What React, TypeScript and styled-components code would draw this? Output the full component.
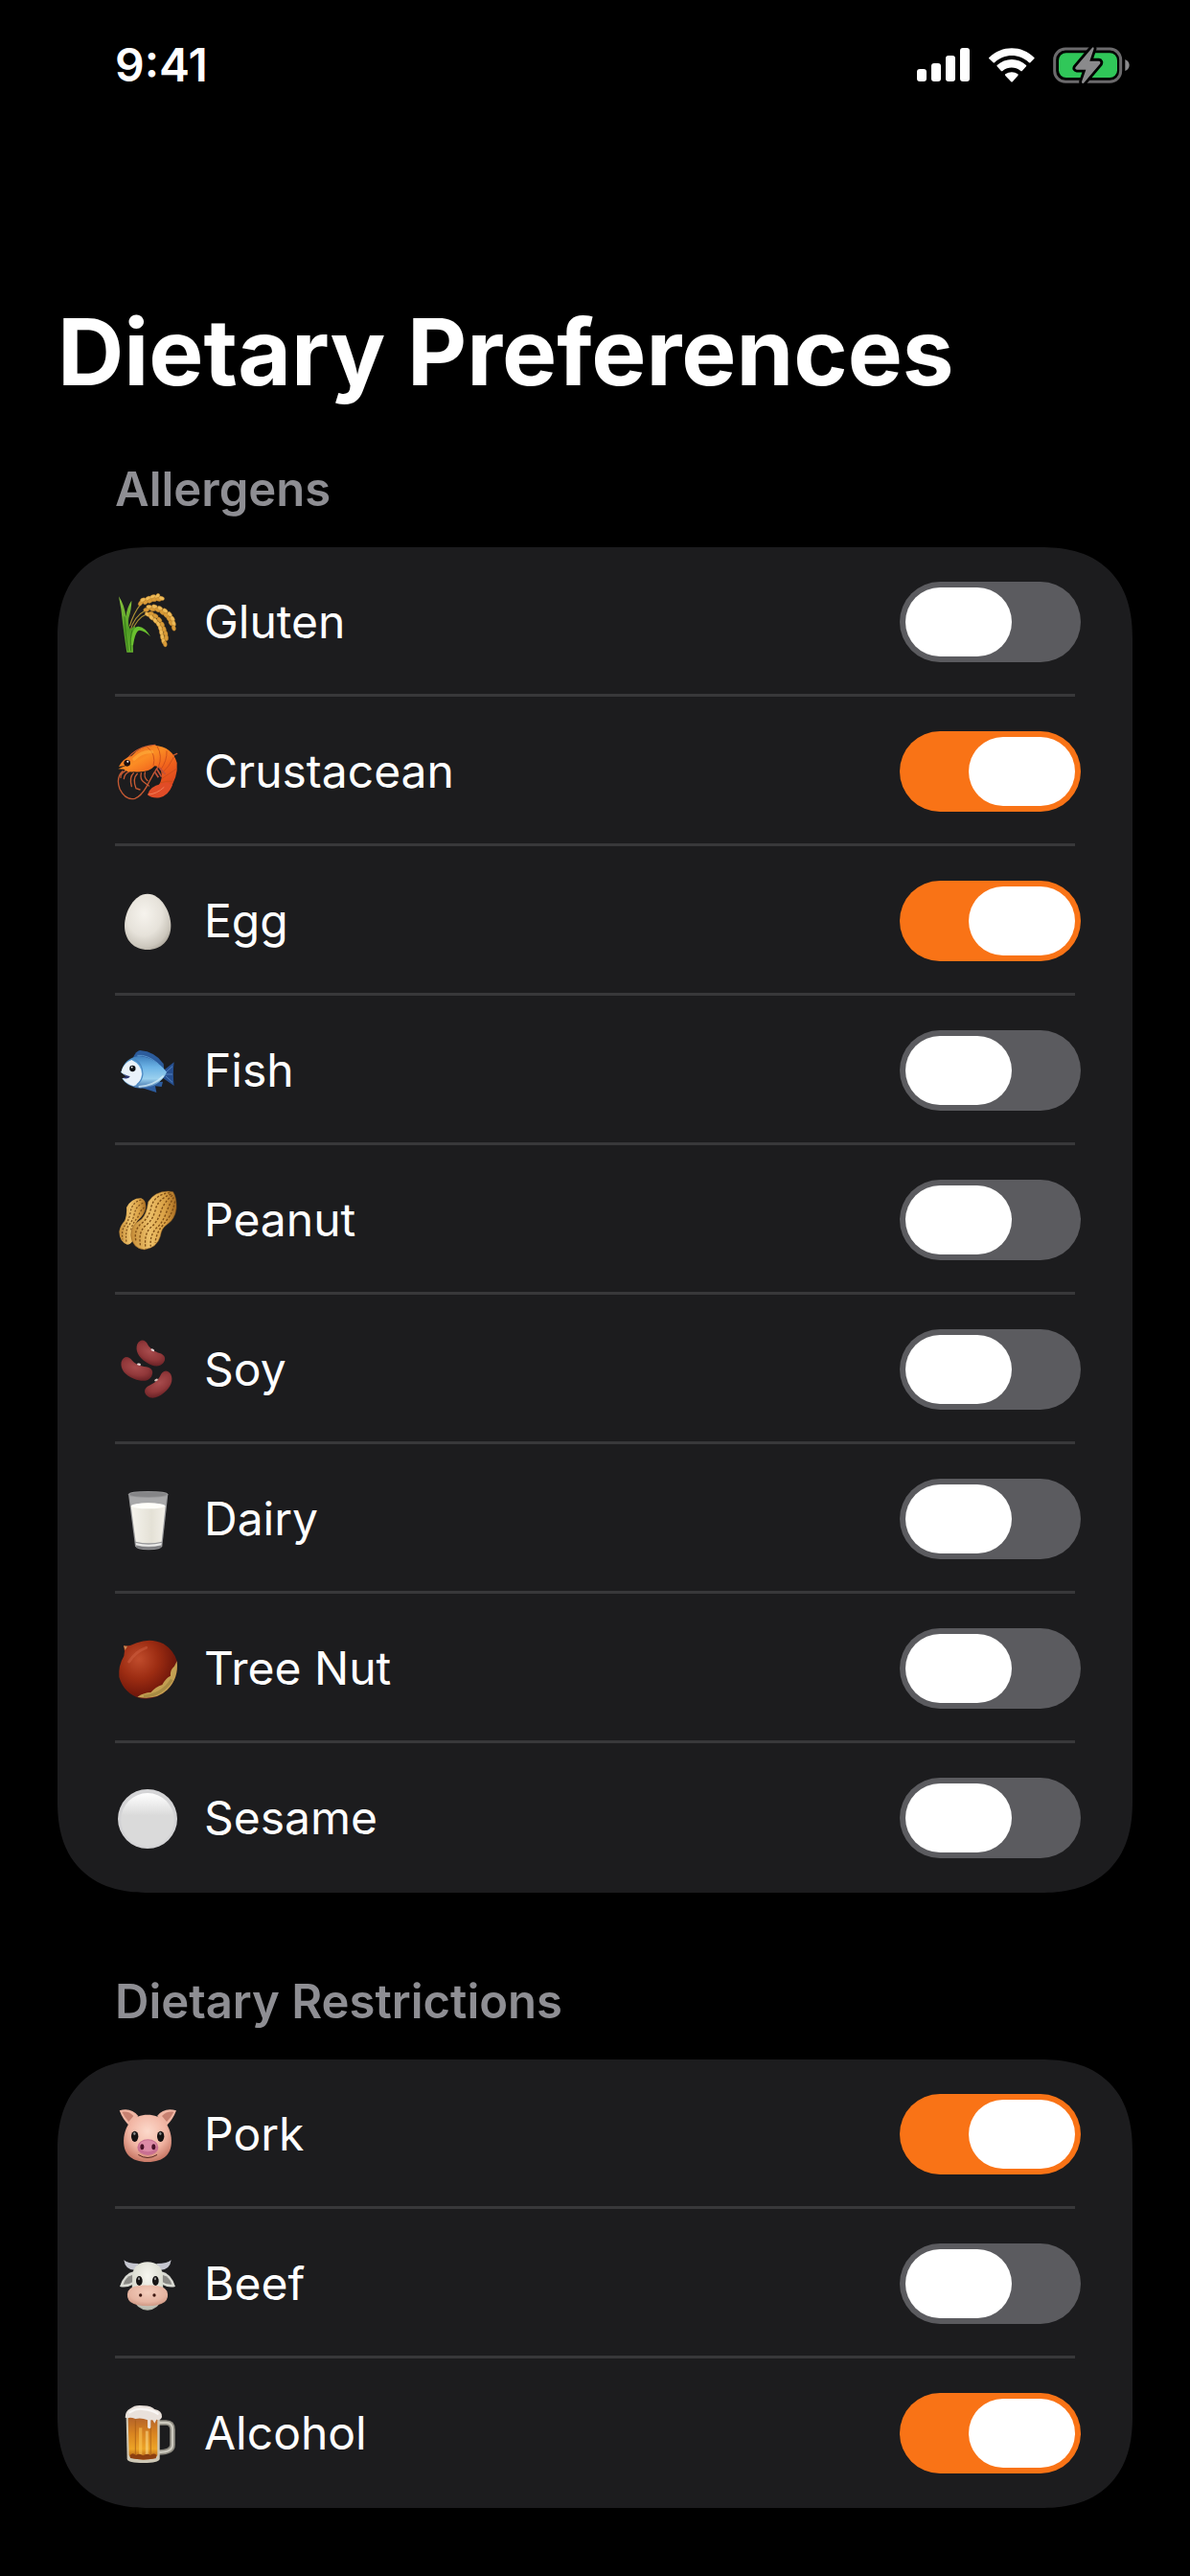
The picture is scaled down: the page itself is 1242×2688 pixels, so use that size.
import React, { useState } from 'react';
import styled, { createGlobalStyle } from 'styled-components';

const GlobalStyle = createGlobalStyle`
  *, *::before, *::after { box-sizing: border-box; }
  html { background: #000; }
  body {
    margin: 0;
    background: #000;
    color: #fff;
    font-family: Inter, Roboto, 'Liberation Sans', sans-serif;
  }
`;

const Screen = styled.div`
  min-height: 100vh;
  padding-bottom: 70px;
  background: #000;
`;

const StatusBar = styled.header`
  display: flex;
  align-items: center;
  justify-content: space-between;
  height: 136px;
  padding: 0 63px 0 120px;
`;

const Time = styled.time`
  font-size: 48px;
  line-height: 56px;
  font-weight: 600;
`;

const StatusIcons = styled.div`
  display: flex;
  align-items: center;
  gap: 18px;

  svg { display: block; }
`;

const Main = styled.main`
  padding: 171px 60px 0;
`;

const Title = styled.h1`
  margin: 0;
  font-size: 96px;
  line-height: 120px;
  font-weight: 700;
`;

const Section = styled.section`
  padding-top: 54px;

  & + & { padding-top: 84px; }
`;

const SectionTitle = styled.h2`
  margin: 0;
  padding: 0 60px 30px;
  color: #8e8e93;
  font-size: 49px;
  line-height: 60px;
  font-weight: 600;
`;

const Card = styled.ul`
  margin: 0;
  padding: 0 60px;
  list-style: none;
  background: #1c1c1e;
  border-radius: 82px;

  @supports (corner-shape: superellipse(1.2)) {
    border-radius: 96px;
    corner-shape: superellipse(1.25);
  }
`;

const Item = styled.li`
  border-bottom: 3px solid #38383a;

  &:last-child { border-bottom-color: transparent; }
`;

const Row = styled.label`
  display: flex;
  align-items: center;
  gap: 25px;
  height: 153px;
  padding-top: 3px;
  margin-right: -6px;
  font-size: 48px;
  line-height: 60px;
  cursor: pointer;
`;

const Name = styled.span`
  flex: 1;
`;

const EmojiArt = styled.svg`
  display: block;
  flex: none;
  width: 68px;
  height: 68px;
`;

const Switch = styled.input`
  appearance: none;
  display: flex;
  flex: none;
  width: 189px;
  height: 84px;
  margin: 0;
  padding: 6px;
  border-radius: 42px;
  background: #5b5b5f;
  cursor: pointer;

  &::before {
    content: '';
    width: 111px;
    height: 72px;
    border-radius: 36px;
    background: #fff;
  }

  &:checked {
    justify-content: flex-end;
    background: #f97316;
  }
`;

/* ---------- status icons ---------- */

const Signal = () => (
  <svg width="56" height="36" viewBox="0 0 56 36" fill="#fff" aria-hidden="true">
    <rect x="0" y="22" width="10" height="13" rx="3" />
    <rect x="15" y="16" width="10" height="19" rx="3" />
    <rect x="30" y="8" width="10" height="27" rx="3" />
    <rect x="45" y="0" width="10" height="35" rx="3" />
  </svg>
);

const Wifi = () => (
  <svg width="50" height="36" viewBox="392 86 150 108" fill="#fff" aria-hidden="true">
    <path d="M396 116C436 77 498 77 537 116Q539 118 537 120L526 131Q523 134 520 131C490 103 444 103 414 131Q411 134 408 131L396 120Q394 118 396 116Z" />
    <path d="M421 140C447 116 487 116 512 140Q514 142 512 144L500 157Q497 160 494 157C478 144 455 144 439 157Q436 160 433 157L421 144Q419 142 421 140Z" />
    <path d="M447 168C459 160 475 160 486 168Q488 170 486 173L470 191Q467 194 464 191L447 173Q445 170 447 168Z" />
  </svg>
);

const Battery = () => (
  <svg width="80" height="40" viewBox="596 82 240 120" aria-hidden="true">
    <rect x="601" y="91" width="207" height="103" rx="34" fill="none" stroke="#6b6a6c" strokeWidth="9" />
    <path d="M822 124Q835 130 835 142T822 160Z" fill="#8a8a8c" />
    <rect x="614" y="104" width="183" height="77" rx="23" fill="#30c759" />
    <path
      d="M719 87L667 148Q663 155 671 156H699L686 194Q686 201 692 198L743 138Q747 130 739 129H711L724 90Q723 84 719 87Z"
      fill="#8a8a8c"
      stroke="#000"
      strokeWidth="17"
      strokeLinejoin="round"
      paintOrder="stroke"
    />
  </svg>
);

/* ---------- food drawings ---------- */

const GRAINS: Array<[number, number, number]> = [
  [140, 118, -55], [148, 108, -20], [156, 115, -35], [164, 103, -25], [170, 111, -30],
  [179, 98, -20], [183, 107, -10], [193, 96, -50], [197, 106, 10], [206, 103, 20],
  [158, 139, -10], [167, 130, 10], [178, 137, 10], [184, 129, 15], [194, 139, 25],
  [201, 134, 30], [208, 147, 35], [217, 142, 40], [220, 156, 45], [231, 153, 50],
  [229, 167, 55], [240, 167, 60], [235, 180, 60], [244, 182, 75], [244, 196, 75],
  [162, 153, 30], [173, 151, 10], [174, 163, 50], [187, 158, 30], [186, 173, 55],
  [199, 170, 50], [196, 184, 60], [208, 185, 65], [202, 197, 70], [214, 200, 75],
  [205, 210, 80], [219, 214, 80], [208, 224, 85], [221, 227, 90], [212, 238, 75],
  [217, 246, 85],
];

const Rice = () => (
  <EmojiArt viewBox="60 75 204 204" aria-hidden="true">
    <defs>
      <linearGradient id="rice-green" x1="0" y1="0" x2="0" y2="1">
        <stop offset="0" stopColor="#8cc63f" />
        <stop offset=".6" stopColor="#4f9c24" />
        <stop offset="1" stopColor="#66b22f" />
      </linearGradient>
    </defs>
    <g fill="none" stroke="#a98f35" strokeWidth="3.5">
      <path d="M106 190Q118 150 140 122Q160 106 200 100" />
      <path d="M108 205Q118 160 160 138Q220 130 244 192" />
      <path d="M112 210Q126 165 164 150Q205 170 216 240" />
    </g>
    <path d="M97 272Q88 215 84 180Q80 135 72 97Q90 125 94 160Q98 130 112 110Q112 135 103 165Q99 185 108 200Q120 188 124 192Q114 230 117 272Z" fill="url(#rice-green)" />
    <path d="M110 250Q112 190 134 191Q156 194 171 223Q154 205 138 203Q124 202 117 250Z" fill="#6ac02f" />
    <path d="M101 268Q92 210 90 160M110 268Q106 225 114 203" fill="none" stroke="#357c18" strokeWidth="3" />
    {GRAINS.map(([x, y, angle], i) => (
      <ellipse
        key={i}
        cx={x}
        cy={y}
        rx="9"
        ry="6"
        transform={`rotate(${angle} ${x} ${y})`}
        fill={i % 2 ? '#efbb58' : '#d99b38'}
        stroke="#b47a25"
        strokeWidth="1"
      />
    ))}
  </EmojiArt>
);

const Shrimp = () => (
  <EmojiArt viewBox="60 543 204 204" aria-hidden="true">
    <defs>
      <linearGradient id="shrimp-body" x1=".1" y1="0" x2=".8" y2="1">
        <stop offset="0" stopColor="#e8621c" />
        <stop offset=".35" stopColor="#fb8d24" />
        <stop offset=".65" stopColor="#f0601c" />
        <stop offset="1" stopColor="#d9441f" />
      </linearGradient>
    </defs>
    <g fill="none" stroke="#c65a33" strokeWidth="4" strokeLinecap="round">
      <path d="M84 644Q62 664 75 700Q92 736 122 730Q142 722 158 694L182 650Q200 612 254 589" />
      <path d="M98 606Q128 566 186 562" />
      <path d="M92 644Q76 652 78 664M104 646Q90 652 88 668M118 650Q104 662 112 692M130 652Q114 668 126 698L138 702M142 650Q138 670 150 678L166 690M154 648Q150 664 162 674" />
    </g>
    <path d="M70 637L96 626L72 630Q84 604 112 596Q136 566 184 563Q240 568 254 618Q258 664 228 704L196 690Q212 668 204 642Q196 628 184 628Q166 650 120 646Q96 648 88 638Z" fill="url(#shrimp-body)" />
    <path d="M204 684Q168 692 162 718Q176 730 200 727Q228 720 240 688Q222 674 204 684Z" fill="#e04c27" />
    <path d="M164 717Q190 716 214 694" fill="none" stroke="#f47f58" strokeWidth="3" />
    <g fill="none" stroke="#c94a1b" strokeWidth="2.5">
      <path d="M160 568Q190 590 180 628M192 566Q210 596 196 632M222 580Q224 610 203 640M244 600Q230 630 206 652M254 636Q230 652 206 668M242 676Q222 674 204 680" />
    </g>
    <path d="M120 606Q146 580 176 584" fill="none" stroke="#ffb03c" strokeWidth="10" strokeLinecap="round" opacity=".6" />
    <path d="M190 636L206 662M198 632L218 654M184 646L196 664" stroke="#c2523a" strokeWidth="5" />
    <circle cx="98" cy="619" r="10" fill="#1a0f10" />
    <circle cx="100" cy="614" r="3" fill="#fff" />
  </EmojiArt>
);

const EggArt = () => (
  <EmojiArt viewBox="60 81 204 204" aria-hidden="true">
    <defs>
      <radialGradient id="egg-shell" cx=".42" cy=".36" r=".7">
        <stop offset="0" stopColor="#f6f3ed" />
        <stop offset=".55" stopColor="#e6e2da" />
        <stop offset=".85" stopColor="#cbc6bc" />
        <stop offset="1" stopColor="#a8a297" />
      </radialGradient>
    </defs>
    <path d="M162 98C204 98 235 154 235 198C235 244 204 273 162 273C120 273 90 244 90 198C90 154 120 98 162 98Z" fill="url(#egg-shell)" />
  </EmojiArt>
);

const FishArt = () => (
  <EmojiArt viewBox="60 549 204 204" aria-hidden="true">
    <defs>
      <linearGradient id="fish-body" x1="0" y1="0" x2="0" y2="1">
        <stop offset="0" stopColor="#3f7fbd" />
        <stop offset=".35" stopColor="#6db4e6" />
        <stop offset=".7" stopColor="#9ad0ee" />
        <stop offset="1" stopColor="#3d6ea8" />
      </linearGradient>
    </defs>
    <path d="M116 612Q126 590 138 588Q186 592 212 630L214 650Z" fill="#2c5c9c" />
    <path d="M130 604Q160 600 196 630" stroke="#5a94cc" strokeWidth="3" fill="none" />
    <path d="M208 654L245 625Q240 660 245 699L206 672Z" fill="#264f90" />
    <path d="M218 658L240 638M216 663H240M218 668L240 688" stroke="#5b8cc6" strokeWidth="2.5" />
    <path d="M146 706L190 720L186 700L206 702L210 686L170 690Z" fill="#2d5d9f" />
    <path d="M80 654Q90 612 134 606Q186 610 222 656Q200 704 140 707Q98 704 82 676L98 672L78 656Z" fill="url(#fish-body)" />
    <path d="M80 654Q88 626 112 618Q142 632 144 662Q140 694 118 700Q96 694 84 676L104 672L80 658Z" fill="#e9f2fa" />
    <path d="M122 616Q146 630 147 662Q145 684 128 696" fill="none" stroke="#4b86c0" strokeWidth="3.5" />
    <path d="M134 702Q180 700 212 668" fill="none" stroke="#d5edf8" strokeWidth="6" opacity=".75" />
    <path d="M78 655Q92 668 107 669Q104 679 84 675L96 670Z" fill="#2b3572" />
    <circle cx="115" cy="645" r="9.5" fill="#0d1015" />
    <circle cx="113" cy="641" r="2.5" fill="#fff" />
  </EmojiArt>
);

const PeanutArt = () => (
  <EmojiArt viewBox="60 87 204 204" aria-hidden="true">
    <defs>
      <linearGradient id="peanut-shell" x1="0" y1="0" x2="1" y2="0">
        <stop offset="0" stopColor="#c58c37" />
        <stop offset=".4" stopColor="#edc069" />
        <stop offset=".75" stopColor="#d9a044" />
        <stop offset="1" stopColor="#a96d22" />
      </linearGradient>
    </defs>
    <path d="M96 150Q112 120 142 121Q160 128 156 154Q152 172 136 186Q122 196 122 224Q120 264 98 266Q74 258 73 226Q76 206 90 192Q98 174 96 150Z" fill="url(#peanut-shell)" />
    <g fill="none" stroke="#7c4f1a" strokeWidth="3.5" strokeDasharray="6 5">
      <path d="M142 126Q112 134 108 168Q102 196 88 210Q80 226 84 250" />
      <path d="M148 136Q124 146 120 174Q114 194 100 210Q92 230 96 260" />
      <path d="M152 150Q138 160 132 180Q114 200 110 220" />
    </g>
    <path d="M164 132Q184 100 226 99L242 101Q254 120 252 154Q248 188 222 204Q206 214 202 240Q192 276 152 282Q114 278 110 236Q112 204 138 190Q158 178 164 132Z" fill="url(#peanut-shell)" stroke="#8a5a20" strokeWidth="1.5" />
    <g fill="none" stroke="#7f4e16" strokeWidth="4" strokeDasharray="7 5">
      <path d="M232 104Q186 108 174 146Q168 182 140 202Q118 224 126 256" />
      <path d="M236 108Q198 122 188 152Q180 190 154 208Q132 228 140 272" />
      <path d="M240 112Q214 132 204 162Q194 196 170 214Q150 236 156 278" />
      <path d="M244 118Q230 140 220 168Q208 200 188 216Q168 240 172 272" />
      <path d="M248 130Q242 160 232 176Q210 206 200 218Q188 240 186 260" />
    </g>
  </EmojiArt>
);

const BEAN = 'M-50 -11C-48 -33 -32 -33 -20 -24C-7 -15 10 -14 26 -16C44 -18 53 -8 49 8C43 26 24 31 0 28C-29 25 -48 10 -50 -11Z';

const BeansArt = () => (
  <EmojiArt viewBox="60 555 204 204" aria-hidden="true">
    <defs>
      <radialGradient id="bean-skin" cx=".45" cy=".4" r=".65">
        <stop offset="0" stopColor="#a84c4d" />
        <stop offset=".6" stopColor="#91383a" />
        <stop offset="1" stopColor="#6a2226" />
      </radialGradient>
    </defs>
    <path transform="translate(170 609) rotate(26)" d={BEAN} fill="url(#bean-skin)" />
    <path transform="translate(127 658) rotate(15) scale(1.04)" d={BEAN} fill="url(#bean-skin)" />
    <path transform="translate(198 707) scale(-1 1) rotate(32)" d={BEAN} fill="url(#bean-skin)" />
    <ellipse cx="178" cy="596" rx="6" ry="3.5" transform="rotate(30 178 596)" fill="#e8d5d5" />
    <ellipse cx="135" cy="641" rx="6" ry="3.5" transform="rotate(10 135 641)" fill="#e8d5d5" />
    <ellipse cx="189" cy="690" rx="6" ry="3.5" transform="rotate(-25 189 690)" fill="#d8c0b8" />
  </EmojiArt>
);

const MilkArt = () => (
  <EmojiArt viewBox="60 63 204 204" aria-hidden="true">
    <defs>
      <linearGradient id="milk-fill" x1="0" y1="0" x2="1" y2="0">
        <stop offset="0" stopColor="#f5f3ec" />
        <stop offset=".6" stopColor="#e4e1d6" />
        <stop offset="1" stopColor="#f2efe8" />
      </linearGradient>
    </defs>
    <path d="M102 88Q104 78 164 78Q224 78 226 88L208 250Q206 262 165 262Q126 262 123 250Z" fill="#98989a" />
    <path d="M106 94Q164 104 222 94L218 124H110Z" fill="#a9a9aa" />
    <ellipse cx="164" cy="88" rx="58" ry="8" fill="#858587" />
    <path d="M110 124Q164 106 218 124L206 236Q166 246 125 236Z" fill="url(#milk-fill)" />
    <ellipse cx="164" cy="124" rx="53" ry="9" fill="#fffef9" />
    <path d="M125 240Q165 250 206 240L205 247Q165 256 126 247Z" fill="#ebebe9" />
    <path d="M127 252Q165 261 204 252" fill="none" stroke="#77777a" strokeWidth="4" />
  </EmojiArt>
);

const ChestnutArt = () => (
  <EmojiArt viewBox="60 531 204 204" aria-hidden="true">
    <defs>
      <radialGradient id="chestnut-skin" cx=".34" cy=".32" r=".75">
        <stop offset="0" stopColor="#c04c2c" />
        <stop offset=".45" stopColor="#9c2c12" />
        <stop offset=".8" stopColor="#75190b" />
        <stop offset="1" stopColor="#5a1622" />
      </radialGradient>
    </defs>
    <path d="M87 562Q108 564 128 553Q172 536 212 556Q244 576 254 610Q260 664 224 700Q188 734 140 727Q88 712 73 660Q70 624 88 594Q92 578 87 562Z" fill="url(#chestnut-skin)" />
    <path d="M87 562Q93 564 99 563L92 576Q90 570 87 562Z" fill="#c78a55" />
    <path d="M254 610Q260 664 224 700Q188 734 130 722Q152 708 172 708Q188 690 208 684Q218 664 234 656Q232 636 246 626Z" fill="#c3a052" />
    <path d="M150 720Q206 718 238 668" fill="none" stroke="#9c823f" strokeWidth="9" opacity=".7" />
    <path d="M104 612Q124 580 158 568" fill="none" stroke="#d7694a" strokeWidth="9" strokeLinecap="round" opacity=".4" />
  </EmojiArt>
);

const WhiteCircle = () => (
  <EmojiArt viewBox="60 39 204 204" aria-hidden="true">
    <defs>
      <linearGradient id="circle-shine" x1="0" y1="0" x2="0" y2="1">
        <stop offset="0" stopColor="#fff" />
        <stop offset=".42" stopColor="#dadada" />
        <stop offset="1" stopColor="#dadada" />
      </linearGradient>
    </defs>
    <circle cx="162" cy="144" r="93" fill="#d4d4d6" />
    <ellipse cx="162" cy="147" rx="83" ry="84" fill="url(#circle-shine)" />
  </EmojiArt>
);

const PigArt = () => (
  <EmojiArt viewBox="60 39 204 204" aria-hidden="true">
    <defs>
      <radialGradient id="pig-face" cx=".5" cy=".35" r=".65">
        <stop offset="0" stopColor="#fcd9cb" />
        <stop offset=".6" stopColor="#f2b6a4" />
        <stop offset="1" stopColor="#c87866" />
      </radialGradient>
    </defs>
    <path d="M74 67Q110 56 133 84L104 114Q84 94 74 67Z" fill="#efb5a3" />
    <path d="M82 71Q104 68 118 84L103 102Q90 88 82 71Z" fill="#c78171" />
    <path d="M252 67Q214 56 192 84L222 114Q242 94 252 67Z" fill="#efb5a3" />
    <path d="M244 71Q222 68 207 84L222 102Q236 88 244 71Z" fill="#c78171" />
    <path d="M162 80C206 80 230 108 236 150C242 202 214 228 162 228C110 228 82 202 88 150C94 108 118 80 162 80Z" fill="url(#pig-face)" />
    <ellipse cx="122" cy="148" rx="11" ry="17" fill="#171212" />
    <ellipse cx="203" cy="148" rx="11" ry="17" fill="#171212" />
    <ellipse cx="121" cy="139" rx="3.5" ry="5" fill="#888" />
    <ellipse cx="202" cy="139" rx="3.5" ry="5" fill="#888" />
    <ellipse cx="163" cy="182" rx="33" ry="25" fill="#c97092" />
    <ellipse cx="163" cy="178" rx="27" ry="18" fill="#dd8ba7" />
    <ellipse cx="145" cy="181" rx="6" ry="9" fill="#4a1228" />
    <ellipse cx="181" cy="181" rx="6" ry="9" fill="#4a1228" />
    <path d="M134 206Q162 224 191 206" fill="none" stroke="#5a2a22" strokeWidth="3" strokeLinecap="round" />
  </EmojiArt>
);

const CowArt = () => (
  <EmojiArt viewBox="60 507 204 204" aria-hidden="true">
    <defs>
      <radialGradient id="cow-face" cx=".5" cy=".3" r=".7">
        <stop offset="0" stopColor="#f6f6ef" />
        <stop offset=".65" stopColor="#dcddd2" />
        <stop offset="1" stopColor="#b6b7ac" />
      </radialGradient>
      <radialGradient id="cow-nose" cx=".5" cy=".35" r=".65">
        <stop offset="0" stopColor="#f3cdbc" />
        <stop offset=".7" stopColor="#e6b5a2" />
        <stop offset="1" stopColor="#cf9985" />
      </radialGradient>
    </defs>
    <path d="M88 535Q98 546 134 546L122 566Q92 566 88 535Z" fill="#c5c6cf" />
    <path d="M236 535Q226 546 190 546L202 566Q232 566 236 535Z" fill="#c5c6cf" />
    <path d="M120 570Q88 576 75 618Q96 624 120 610Z" fill="#d9dad3" />
    <path d="M114 582Q92 588 86 611Q104 612 118 602Z" fill="#8b8a86" />
    <path d="M204 570Q236 576 249 618Q228 624 204 610Z" fill="#d9dad3" />
    <path d="M210 582Q232 588 238 611Q220 612 206 602Z" fill="#8b8a86" />
    <path d="M162 541Q204 542 209 580L212 650Q196 690 162 692Q128 690 112 650L115 580Q120 542 162 541Z" fill="url(#cow-face)" />
    <path d="M162 614Q212 612 223 632Q230 652 216 666Q196 679 162 679Q128 679 108 666Q94 652 101 632Q112 612 162 614Z" fill="url(#cow-nose)" />
    <ellipse cx="136" cy="600" rx="10" ry="15" fill="#151313" />
    <ellipse cx="187" cy="600" rx="10" ry="15" fill="#151313" />
    <ellipse cx="135" cy="593" rx="3" ry="4.5" fill="#999" />
    <ellipse cx="186" cy="593" rx="3" ry="4.5" fill="#999" />
    <circle cx="140" cy="645" r="5" fill="#3d1710" />
    <circle cx="183" cy="645" r="5" fill="#3d1710" />
  </EmojiArt>
);

const BeerArt = () => (
  <EmojiArt viewBox="60 75 204 204" aria-hidden="true">
    <defs>
      <linearGradient id="beer-fill" x1="0" y1="0" x2="0" y2="1">
        <stop offset="0" stopColor="#b0602a" />
        <stop offset=".4" stopColor="#d98420" />
        <stop offset=".75" stopColor="#eda426" />
        <stop offset="1" stopColor="#a85414" />
      </linearGradient>
    </defs>
    <path d="M198 144H220Q240 144 240 166V214Q240 236 198 237" fill="none" stroke="#8d8a80" strokeWidth="17" />
    <path d="M198 144H220Q240 144 240 166V214Q240 236 198 237" fill="none" stroke="#cdcabf" strokeWidth="7" />
    <path d="M95 126H200V258Q196 270 150 270Q100 270 98 258Z" fill="#cfc8b6" />
    <path d="M101 124H193V246Q190 260 148 260Q106 258 104 246Z" fill="url(#beer-fill)" />
    <path d="M124 136V250M172 136V250" stroke="#a65c16" strokeWidth="3" opacity=".75" />
    <path d="M140 160V248" stroke="#ffd05f" strokeWidth="10" opacity=".5" />
    <path d="M160 170V248" stroke="#ffe79a" strokeWidth="9" opacity=".5" />
    <path d="M107 246Q116 236 125 246Q138 238 148 247Q160 238 171 246Q182 238 190 245L188 256Q148 262 108 255Z" fill="#8c3f10" />
    <path d="M92 128Q92 108 108 100Q124 86 150 91Q174 92 184 102Q208 106 207 126Q204 138 190 134L184 146L178 136H172V160Q166 166 162 158V136Q144 128 124 132Q108 126 100 130Z" fill="#e9e1db" />
    <path d="M106 112Q128 98 150 102Q176 104 194 116" fill="none" stroke="#fff" strokeWidth="7" strokeLinecap="round" opacity=".7" />
  </EmojiArt>
);

/* ---------- data ---------- */

type Entry = { id: string; name: string; Art: () => React.JSX.Element };

const SECTIONS: Array<{ title: string; entries: Entry[] }> = [
  {
    title: 'Allergens',
    entries: [
      { id: 'gluten', name: 'Gluten', Art: Rice },
      { id: 'crustacean', name: 'Crustacean', Art: Shrimp },
      { id: 'egg', name: 'Egg', Art: EggArt },
      { id: 'fish', name: 'Fish', Art: FishArt },
      { id: 'peanut', name: 'Peanut', Art: PeanutArt },
      { id: 'soy', name: 'Soy', Art: BeansArt },
      { id: 'dairy', name: 'Dairy', Art: MilkArt },
      { id: 'tree-nut', name: 'Tree Nut', Art: ChestnutArt },
      { id: 'sesame', name: 'Sesame', Art: WhiteCircle },
    ],
  },
  {
    title: 'Dietary Restrictions',
    entries: [
      { id: 'pork', name: 'Pork', Art: PigArt },
      { id: 'beef', name: 'Beef', Art: CowArt },
      { id: 'alcohol', name: 'Alcohol', Art: BeerArt },
    ],
  },
];

export default function App() {
  const [selected, setSelected] = useState<Record<string, boolean>>({
    crustacean: true,
    egg: true,
    pork: true,
    alcohol: true,
  });

  return (
    <Screen>
      <GlobalStyle />
      <StatusBar>
        <Time>9:41</Time>
        <StatusIcons>
          <Signal />
          <Wifi />
          <Battery />
        </StatusIcons>
      </StatusBar>
      <Main>
        <Title>Dietary Preferences</Title>
        {SECTIONS.map(({ title, entries }) => (
          <Section key={title}>
            <SectionTitle>{title}</SectionTitle>
            <Card>
              {entries.map(({ id, name, Art }) => (
                <Item key={id}>
                  <Row htmlFor={id}>
                    <Art />
                    <Name>{name}</Name>
                    <Switch
                      id={id}
                      type="checkbox"
                      role="switch"
                      checked={!!selected[id]}
                      onChange={(e) => {
                        const { checked } = e.target;
                        setSelected((prev) => ({ ...prev, [id]: checked }));
                      }}
                    />
                  </Row>
                </Item>
              ))}
            </Card>
          </Section>
        ))}
      </Main>
    </Screen>
  );
}
